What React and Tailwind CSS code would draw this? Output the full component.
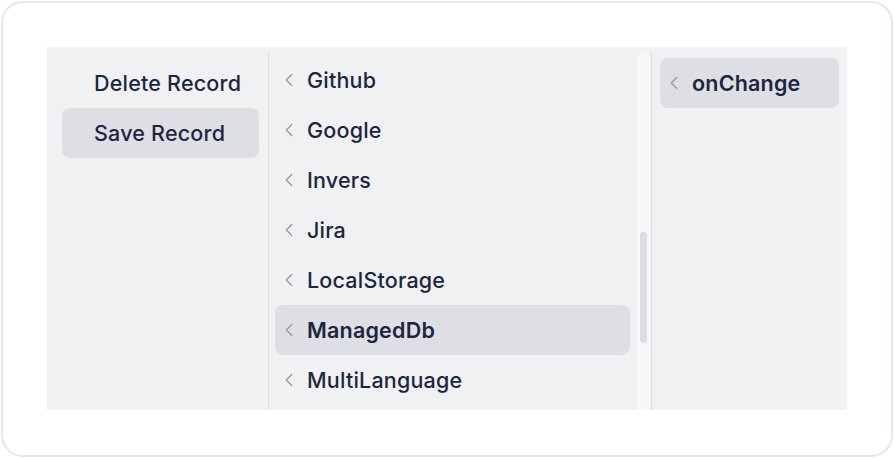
import React from 'react';
import { ChevronLeft } from 'lucide-react';

const ACTIONS = [
  { id: 'delete', label: 'Delete Record', active: false },
  { id: 'save', label: 'Save Record', active: true },
];

const MODULES = ['Github', 'Google', 'Invers', 'Jira', 'LocalStorage', 'ManagedDb', 'MultiLanguage'];

const EVENTS = ['onChange'];

const Row = ({ label, active, chevron }) => (
  <div
    className={`h-[50px] shrink-0 flex items-center rounded-lg ${active ? 'bg-[#dedfe4]' : ''} ${chevron ? 'pl-[3px]' : 'pl-8'}`}
  >
    {chevron && <ChevronLeft size={22} strokeWidth={1.5} className="text-[#979aa2] mr-[7px] shrink-0" />}
    <span className={`text-[21.5px] tracking-[0.2px] text-[#1b2740] ${active && chevron ? 'font-semibold' : 'font-medium'}`}>{label}</span>
  </div>
);

export default function App() {
  return (
    <div className="w-[894px] h-[458px] bg-white p-px" style={{ fontFamily: 'Inter, "Noto Sans", sans-serif' }}>
      <div className="w-[892px] h-[456px] border-2 border-[#e4e6ea] rounded-[22px] p-[44px]">
        <div className="w-[800px] h-[363px] bg-[#f0f1f3] flex overflow-hidden">
          {/* Actions */}
          <div className="w-[221px] pl-[15px] pr-[9px] pt-[11px] flex flex-col">
            {ACTIONS.map(a => <Row key={a.id} label={a.label} active={a.active} />)}
          </div>
          <div className="w-px bg-[#dcdee3] mt-1" />

          {/* Modules (scrolled list) */}
          <div className="w-[382px] flex">
            <div className="flex-1 pl-[6px] pr-[7px] pt-2 flex flex-col overflow-hidden">
              {MODULES.map(m => <Row key={m} label={m} active={m === 'ManagedDb'} chevron />)}
            </div>
            <div className="w-[13px] mt-[5px] mr-px rounded-t-md bg-[#f6f7f8] flex justify-center">
              <div className="w-[7px] h-[111px] mt-[180px] rounded-full bg-[#dcdde2]" />
            </div>
          </div>
          <div className="w-px bg-[#dcdee3] mt-1" />

          {/* Events */}
          <div className="flex-1 pl-[8px] pr-[8px] pt-[11px] flex flex-col">
            {EVENTS.map(e => <Row key={e} label={e} active chevron />)}
          </div>
        </div>
      </div>
    </div>
  );
}
